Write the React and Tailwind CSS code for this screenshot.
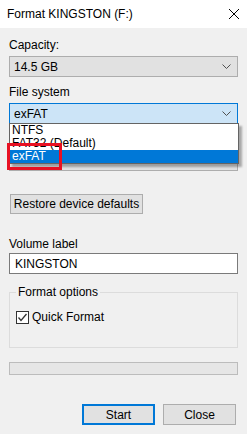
import React from "react"

// small chevron used by the combo boxes
function Chevron() {
  return (
    <svg width="9" height="5" viewBox="0 0 9 5" className="shrink-0">
      <path d="M0.5 0.5 L4.5 4.5 L8.5 0.5" fill="none" stroke="#505050" strokeWidth="1" />
    </svg>
  )
}

function Button({ children, primary, className }) {
  return (
    <div
      className={
        "flex items-center justify-center bg-[#e1e1e1] text-[12px] text-black " +
        (primary ? "border-2 border-[#0078d7] " : "border border-[#adadad] ") +
        className
      }
    >
      {children}
    </div>
  )
}

export default function App() {
  return (
    <div
      className="w-[247px] h-[434px] bg-[#f0f0f0] text-[12px] text-black overflow-hidden"
      style={{ fontFamily: '"Liberation Sans", Arial, sans-serif' }}
    >
      {/* title bar */}
      <div className="h-[28px] bg-white flex items-center justify-between pl-[7px] pr-[8px]">
        <span className="text-[12px] leading-none">Format KINGSTON (F:)</span>
        <svg width="10" height="10" viewBox="0 0 10 10">
          <path d="M0 0 L10 10 M10 0 L0 10" stroke="#000" strokeWidth="1" />
        </svg>
      </div>

      <div className="px-[9px] relative">
        <div className="mt-[9px] h-[16px] leading-[16px]">Capacity:</div>
        <div className="mt-[3px] h-[21px] border border-[#adadad] bg-[#e1e1e1] flex items-center justify-between pl-[4px] pr-[6px]">
          <span>14.5 GB</span>
          <Chevron />
        </div>

        <div className="mt-[7px] h-[16px] leading-[16px]">File system</div>
        <div className="mt-[3px] h-[21px] border border-[#0078d7] bg-[#cce4f7] flex items-center justify-between pl-[4px] pr-[6px]">
          <span>exFAT</span>
          <Chevron />
        </div>

        {/* allocation unit combo, covered by the open list */}
        <div className="mt-[25px] h-[22px] border border-[#adadad] bg-[#e1e1e1]" />

        {/* open drop-down list */}
        <div className="absolute left-[9px] top-[86px] w-[230px] h-[41px] bg-white border border-[#646464] shadow-[3px_3px_2px_rgba(0,0,0,0.3)]">
          <div className="h-[13px] leading-[13px] pl-[2px]">NTFS</div>
          <div className="h-[13px] leading-[13px] pl-[2px]">FAT32 (Default)</div>
          <div className="h-[13px] leading-[13px] pl-[2px] bg-[#0078d7] text-white">exFAT</div>
        </div>

        {/* red highlight */}
        <div className="absolute left-[7px] top-[106px] w-[55px] h-[27px] border-[3px] border-[#e81123]" />

        <Button className="mt-[23px] ml-[1px] w-[133px] h-[20px]">Restore device defaults</Button>

        <div className="mt-[22px] h-[16px] leading-[16px]">Volume label</div>
        <div className="mt-[1px] h-[21px] border border-[#7a7a7a] bg-white flex items-center pl-[5px]">KINGSTON</div>

        {/* format options group */}
        <div className="mt-[18px] relative h-[56px] border border-[#dcdcdc]">
          <span className="absolute left-[6px] top-[-9px] px-[2px] bg-[#f0f0f0] leading-[16px]">Format options</span>
          <div className="flex items-center gap-[3px] mt-[15px] ml-[6px]">
            <div className="w-[13px] h-[13px] border border-[#333] bg-white flex items-center justify-center">
              <svg width="11" height="11" viewBox="0 0 11 11">
                <path d="M1.5 5.5 L4 8.5 L9.5 2" fill="none" stroke="#333" strokeWidth="1.3" />
              </svg>
            </div>
            <span>Quick Format</span>
          </div>
        </div>

        {/* progress bar */}
        <div className="mt-[14px] h-[13px] border border-[#bcbcbc] bg-[#e6e6e6]" />

        <div className="mt-[29px] flex justify-end gap-[8px] pr-[2px]">
          <Button primary className="w-[73px] h-[21px]">Start</Button>
          <Button className="w-[73px] h-[21px]">Close</Button>
        </div>
      </div>
    </div>
  )
}
